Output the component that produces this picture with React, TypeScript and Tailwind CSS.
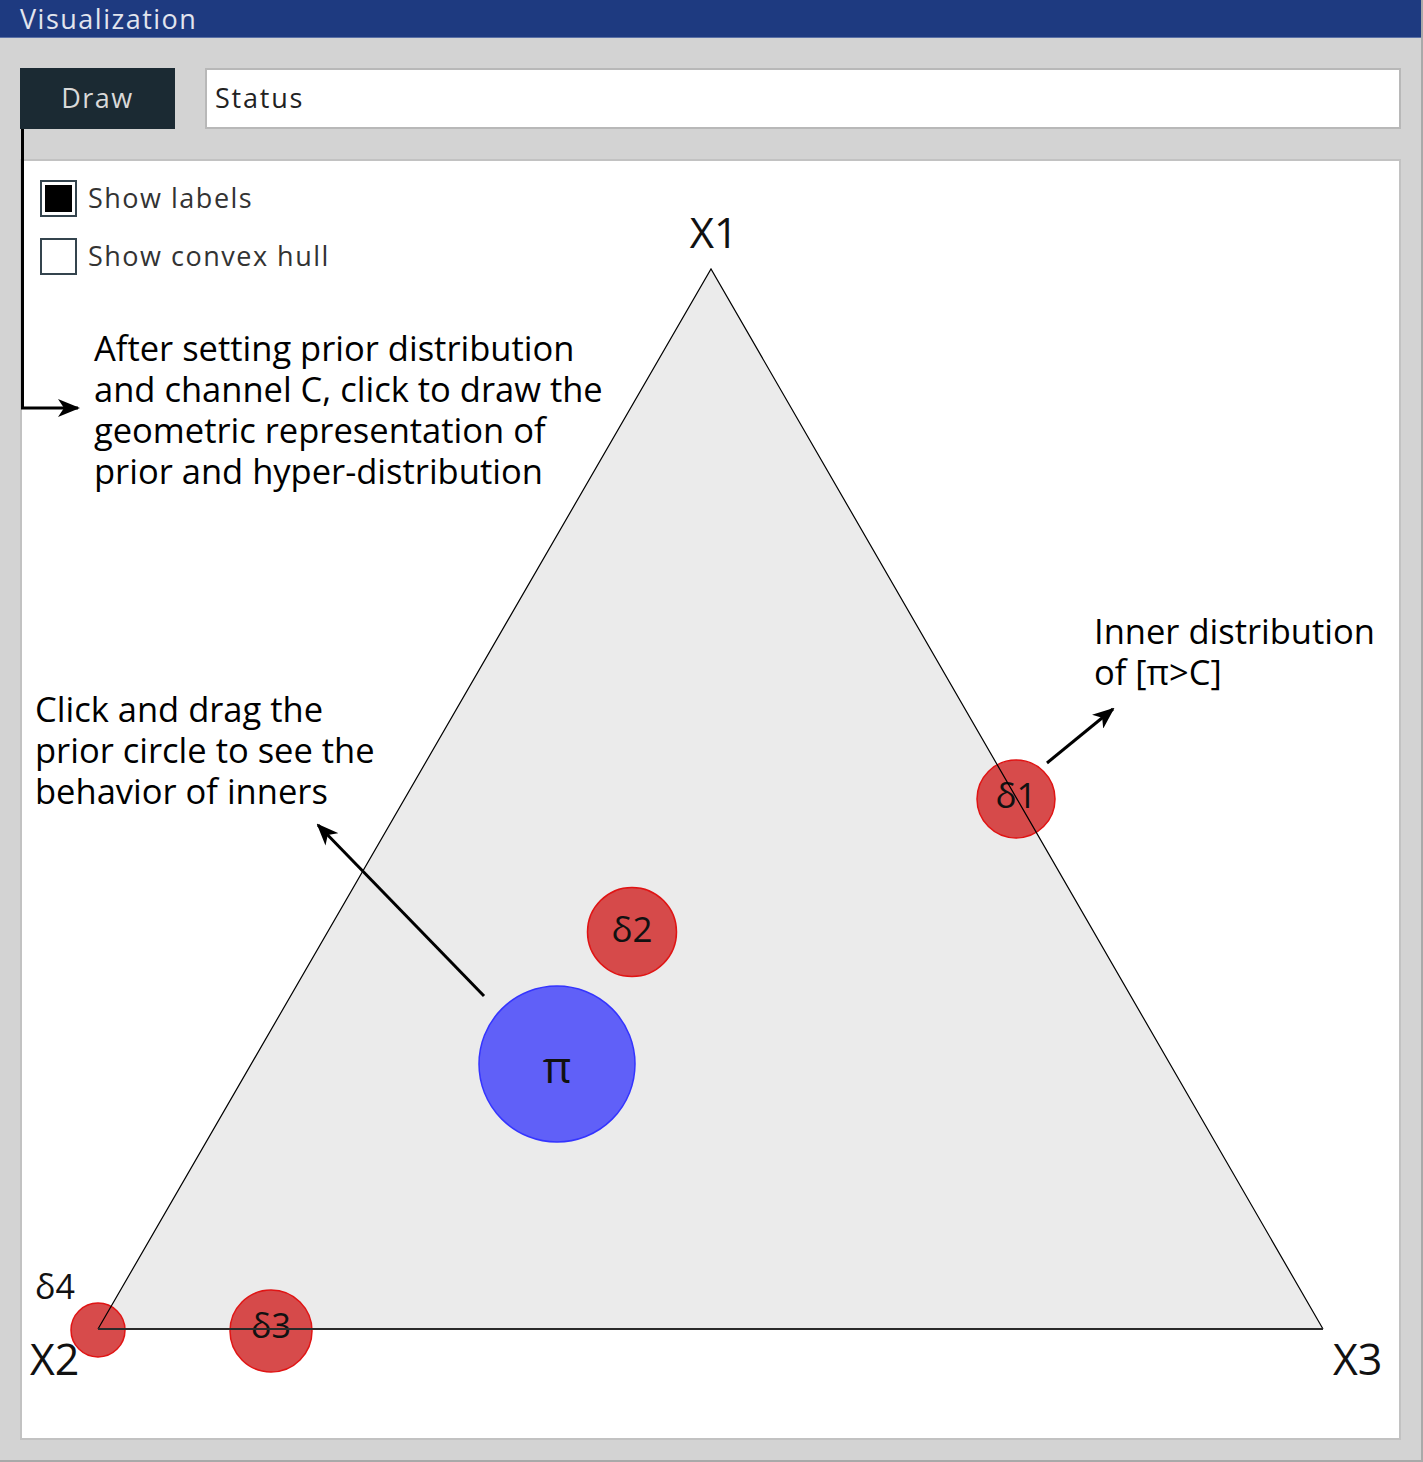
import React from 'react'

const red = { fill: '#d43c3c', stroke: '#e01414' }

function Bubble({ cx, cy, r, label, size = 35, dy = 12, blue = false }: {
  cx: number
  cy: number
  r: number
  label: string
  size?: number
  dy?: number
  blue?: boolean
}) {
  return (
    <g>
      <circle
        cx={cx}
        cy={cy}
        r={r}
        fill={blue ? '#6060f8' : red.fill}
        fillOpacity={blue ? 1 : 0.92}
        stroke={blue ? '#3434ff' : red.stroke}
        strokeWidth={1.5}
      />
      <text x={cx} y={cy + dy} textAnchor="middle" fontSize={size} fill="#111">
        {label}
      </text>
    </g>
  )
}

function Checkbox({ checked, label }: { checked: boolean; label: string }) {
  return (
    <div className="flex items-center gap-[11px] h-[37px]">
      <div className="w-[37px] h-[37px] border-2 border-[#34444e] bg-white p-[3px]">
        {checked && <div className="w-full h-full bg-black" />}
      </div>
      <span className="text-[27px] tracking-[1.5px] text-[#333]">{label}</span>
    </div>
  )
}

export default function App() {
  return (
    <div className="relative w-[1423px] h-[1462px] bg-[#d3d3d3] border-r-2 border-b-2 border-[#a9a9a9] flex flex-col font-['Open_Sans',sans-serif]">
      <div className="h-[38px] bg-[#1e3a80] border-b border-[#5a70a6] px-[20px] text-[27px] leading-[37px] tracking-[1.5px] text-[#e2e5ee]">
        Visualization
      </div>

      <div className="flex gap-[30px] px-[20px] mt-[30px] h-[61px]">
        <button className="w-[155px] bg-[#1b2a33] text-[#d9d9d9] text-[27px] tracking-[1.5px] flex items-center justify-center">
          Draw
        </button>
        <div className="flex-1 bg-white border-2 border-[#b8b8b8] pl-[8px] flex items-center text-[27px] tracking-[1.8px] text-[#222]">
          Status
        </div>
      </div>

      <div className="relative mt-[30px] mx-[20px] h-[1281px] bg-white border-2 border-[#c2c2c2]">
        <svg className="absolute inset-0 w-full h-full" viewBox="22 161 1377 1277">
          <defs>
            <marker
              id="head"
              viewBox="0 0 22 18"
              refX="20"
              refY="9"
              markerWidth="22"
              markerHeight="18"
              markerUnits="userSpaceOnUse"
              orient="auto"
            >
              <path d="M0,0 L22,9 L0,18 L6,9 z" fill="black" />
            </marker>
          </defs>
          <polygon points="711,269 98,1329 1323,1329" fill="#ebebeb" />
          <g fontFamily="'Open Sans', sans-serif">
            <Bubble cx={1016} cy={799} r={39} label="δ1" dy={9} />
            <Bubble cx={632} cy={932} r={44.5} label="δ2" dy={10} />
            <Bubble cx={557} cy={1064} r={78} label="π" size={44} dy={19} blue />
            <Bubble cx={271} cy={1331} r={41} label="δ3" dy={7} size={34} />
            <circle cx={98} cy={1330} r={27} fill={red.fill} fillOpacity={0.92} stroke={red.stroke} strokeWidth={1.5} />
          </g>
          <polyline points="98,1329 711,269 1323,1329" fill="none" stroke="black" strokeWidth={1.2} />
          <line x1={98} y1={1329} x2={1323} y2={1329} stroke="#2a2a2a" strokeWidth={2} />
          <g fontFamily="'Open Sans', sans-serif" fill="#111">
            <text x={714} y={248} textAnchor="middle" fontSize={42}>X1</text>
            <text x={30} y={1375} fontSize={43}>X2</text>
            <text x={1333} y={1375} fontSize={43}>X3</text>
            <text x={35} y={1299} fontSize={34}>δ4</text>
          </g>
          <line x1={1047} y1={763} x2={1113} y2={709} stroke="black" strokeWidth={3} markerEnd="url(#head)" />
          <line x1={484} y1={996} x2={318} y2={825} stroke="black" strokeWidth={3} markerEnd="url(#head)" />
        </svg>

        <div className="relative flex flex-col gap-[21px] pl-[18px] pt-[19px]">
          <Checkbox checked label="Show labels" />
          <Checkbox checked={false} label="Show convex hull" />
        </div>

        <div className="absolute left-[72px] top-[166px] text-[34.5px] leading-[41px] text-black">
          <p>After setting prior distribution</p>
          <p>and channel C, click to draw the</p>
          <p>geometric representation of</p>
          <p>prior and hyper-distribution</p>
        </div>

        <div className="absolute left-[1072px] top-[449px] text-[34.5px] leading-[41px] text-black">
          <p>Inner distribution</p>
          <p>of [π&gt;C]</p>
        </div>

        <div className="absolute left-[13px] top-[527px] text-[34.5px] leading-[41px] text-black">
          <p>Click and drag the</p>
          <p>prior circle to see the</p>
          <p>behavior of inners</p>
        </div>
      </div>

      <svg className="absolute left-0 top-0 pointer-events-none" width={1423} height={1462}>
        <defs>
          <marker
            id="head2"
            viewBox="0 0 22 18"
            refX="20"
            refY="9"
            markerWidth="22"
            markerHeight="18"
            markerUnits="userSpaceOnUse"
            orient="auto"
          >
            <path d="M0,0 L22,9 L0,18 L6,9 z" fill="black" />
          </marker>
        </defs>
        <polyline points="22.5,129 22.5,408 78,408" fill="none" stroke="black" strokeWidth={3} markerEnd="url(#head2)" />
      </svg>
    </div>
  )
}
